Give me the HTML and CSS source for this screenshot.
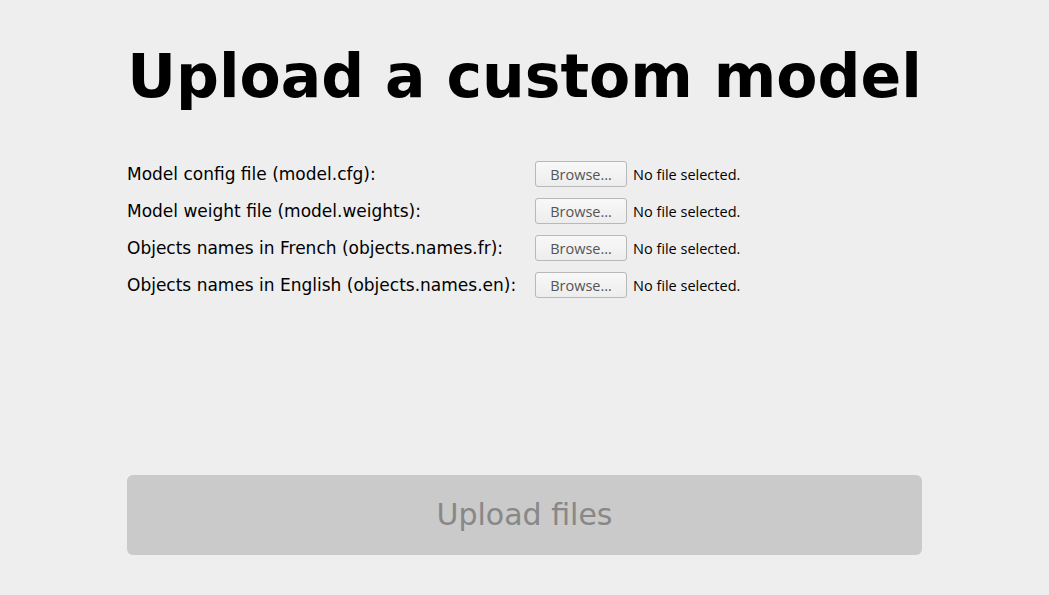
FILE: index.html
```html
<!DOCTYPE html>
<html>
<head>
<meta charset="utf-8">
<link rel="stylesheet" href="styles.css">
</head>
<body>
<main class="page">
  <h1 class="title">Upload a custom model</h1>
  <form class="form">
    <div class="fields">
      <label class="label">Model config file (model.cfg):</label>
      <div class="file"><span class="browse">Browse…</span><span class="status">No file selected.</span></div>
      <label class="label">Model weight file (model.weights):</label>
      <div class="file"><span class="browse">Browse…</span><span class="status">No file selected.</span></div>
      <label class="label">Objects names in French (objects.names.fr):</label>
      <div class="file"><span class="browse">Browse…</span><span class="status">No file selected.</span></div>
      <label class="label">Objects names in English (objects.names.en):</label>
      <div class="file"><span class="browse">Browse…</span><span class="status">No file selected.</span></div>
    </div>
    <button type="button" class="upload" disabled>Upload files</button>
  </form>
</main>
</body>
</html>
```
FILE: styles.css
```css
html, body {
  margin: 0;
  padding: 0;
  background: #eeeeee;
}
body {
  font-family: "DejaVu Sans", sans-serif;
  color: #000;
}
.page {
  width: 795px;
  margin: 0 auto;
  padding-top: 36px;
}
.title {
  margin: 0;
  font-size: 60px;
  font-weight: bold;
  line-height: 80px;
  text-align: center;
  white-space: nowrap;
}
.form {
  margin-top: 45px;
}
.fields {
  display: grid;
  grid-template-columns: 408px 1fr;
  row-gap: 11px;
  align-items: center;
}
.label {
  font-size: 17px;
  line-height: 26px;
}
.file {
  display: flex;
  align-items: center;
  gap: 6px;
}
.browse {
  box-sizing: border-box;
  width: 92px;
  height: 26px;
  border: 1px solid #b8b8b8;
  border-radius: 3px;
  background: linear-gradient(#f8f8f8, #ededed);
  color: #555;
  font-family: "Open Sans", sans-serif;
  font-size: 14.5px;
  display: flex;
  align-items: center;
  justify-content: center;
}
.status {
  font-family: "Open Sans", sans-serif;
  font-size: 14.5px;
}
.upload {
  display: block;
  box-sizing: border-box;
  width: 795px;
  height: 80px;
  margin-top: 177px;
  border: none;
  border-radius: 6px;
  background: #cacaca;
  color: #888888;
  font-family: "DejaVu Sans", sans-serif;
  font-size: 30px;
  line-height: 78px;
  padding: 0;
}
```
